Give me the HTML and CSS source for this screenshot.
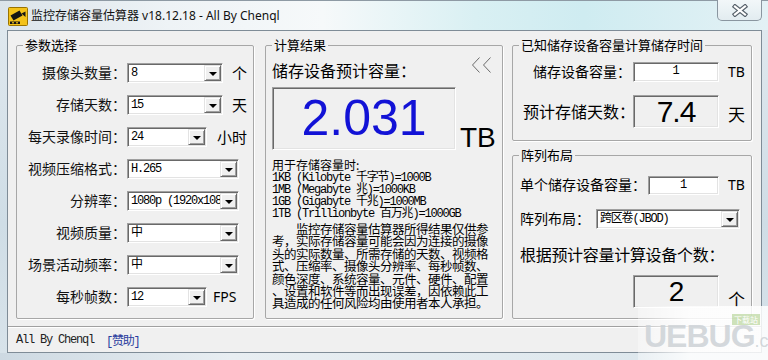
FILE: index.html
```html
<!DOCTYPE html>
<html lang="zh-CN">
<head>
    <meta charset="UTF-8">
    <title>监控存储容量估算器</title>
    <link rel="stylesheet" href="styles.css">
</head>
<body>
    <div class="window">
        <div class="titlebar">
            <svg class="app-icon" viewBox="0 0 20 19">
                <rect x="0.5" y="0.5" width="19" height="18" rx="1" fill="#f3c21a" stroke="#9a7400"/>
                <path d="M2.5 8.5 L11.5 3.5 L14.5 8.5 L5.5 13.5 Z" fill="#151515"/>
                <path d="M13.5 6.5 L17.5 4.5 L17.5 10 Z" fill="#151515"/>
                <rect x="2" y="14.5" width="10" height="2.5" fill="#151515"/>
                <rect x="4" y="15.2" width="2" height="1.2" fill="#f3c21a"/>
                <rect x="8" y="15.2" width="2" height="1.2" fill="#f3c21a"/>
            </svg>
            <span class="title">监控存储容量估算器 v18.12.18 - All By Chenql</span>
            <button class="close-btn" type="button">
                <svg width="16" height="13" viewBox="0 0 16 13">
                    <path d="M3 2.5 L13 10.5 M13 2.5 L3 10.5" stroke="#56606a" stroke-width="4.4" stroke-linecap="square"/>
                    <path d="M3 2.5 L13 10.5 M13 2.5 L3 10.5" stroke="#fff" stroke-width="2.2" stroke-linecap="square"/>
                </svg>
            </button>
        </div>

        <div class="frame-body">
            <div class="frame-side"></div>
            <div class="client">
                <div class="groups">
                    <!-- 参数选择 -->
                    <fieldset class="group group-params">
                        <legend>参数选择</legend>
                        <div class="param-grid">
                            <label>摄像头数量：</label>
                            <div class="ctrl">
                                <div class="combo combo-short sunken"><span class="combo-text">8</span><span class="combo-btn"></span></div>
                                <span class="unit">个</span>
                            </div>

                            <label>存储天数：</label>
                            <div class="ctrl">
                                <div class="combo combo-short sunken"><span class="combo-text">15</span><span class="combo-btn"></span></div>
                                <span class="unit">天</span>
                            </div>

                            <label>每天录像时间：</label>
                            <div class="ctrl">
                                <div class="combo combo-mid sunken"><span class="combo-text">24</span><span class="combo-btn"></span></div>
                                <span class="unit unit-wide">小时</span>
                            </div>

                            <label>视频压缩格式：</label>
                            <div class="ctrl">
                                <div class="combo combo-long sunken"><span class="combo-text">H.265</span><span class="combo-btn"></span></div>
                            </div>

                            <label>分辨率：</label>
                            <div class="ctrl">
                                <div class="combo combo-long sunken"><span class="combo-text">1080p (1920x1080)</span><span class="combo-btn"></span></div>
                            </div>

                            <label>视频质量：</label>
                            <div class="ctrl">
                                <div class="combo combo-long sunken"><span class="combo-text">中</span><span class="combo-btn"></span></div>
                            </div>

                            <label>场景活动频率：</label>
                            <div class="ctrl">
                                <div class="combo combo-long sunken"><span class="combo-text">中</span><span class="combo-btn"></span></div>
                            </div>

                            <label>每秒帧数：</label>
                            <div class="ctrl">
                                <div class="combo combo-mid sunken"><span class="combo-text">12</span><span class="combo-btn"></span></div>
                                <span class="unit unit-fps">FPS</span>
                            </div>
                        </div>
                    </fieldset>

                    <!-- 计算结果 -->
                    <fieldset class="group group-result">
                        <legend>计算结果</legend>
                        <div class="result-head">
                            <span class="result-title">储存设备预计容量：</span>
                            <svg class="collapse" width="22" height="16" viewBox="0 0 22 16">
                                <path d="M8.5 0.5 L1.5 8 L8.5 15.5 M19.5 0.5 L12.5 8 L19.5 15.5" fill="none" stroke="#6b6b6b" stroke-width="1"/>
                            </svg>
                        </div>
                        <div class="result-row">
                            <div class="result-box sunken">2.031</div>
                            <span class="result-unit">TB</span>
                        </div>
                        <div class="notes">
                            <div class="notes-head">用于存储容量时:</div>
                            <div>1KB (Kilobyte 千字节)=1000B</div>
                            <div>1MB (Megabyte 兆)=1000KB</div>
                            <div>1GB (Gigabyte 千兆)=1000MB</div>
                            <div>1TB (Trillionbyte 百万兆)=1000GB</div>
                        </div>
                        <div class="disclaimer">
                            <div class="indent">监控存储容量估算器所得结果仅供参</div>
                            <div>考，实际存储容量可能会因为连接的摄像</div>
                            <div>头的实际数量、所需存储的天数、视频格</div>
                            <div>式、压缩率、摄像头分辨率、每秒帧数、</div>
                            <div>颜色深度、系统容量、元件、硬件、配置</div>
                            <div>、设置和软件等而出现误差，因依赖此工</div>
                            <div>具造成的任何风险均由使用者本人承担。</div>
                        </div>
                    </fieldset>

                    <div class="right-col">
                        <!-- 已知容量求时间 -->
                        <fieldset class="group group-time">
                            <legend>已知储存设备容量计算储存时间</legend>
                            <div class="time-grid">
                                <label>储存设备容量：</label>
                                <div class="field sunken">1</div>
                                <span class="unit-tb">TB</span>

                                <label class="label-big">预计存储天数：</label>
                                <div class="value-box sunken">7.4</div>
                                <span class="unit-big">天</span>
                            </div>
                        </fieldset>

                        <!-- 阵列布局 -->
                        <fieldset class="group group-array">
                            <legend>阵列布局</legend>
                            <div class="array-row first">
                                <label class="array-label">单个储存设备容量：</label>
                                <div class="field field-small sunken">1</div>
                                <span class="unit-tb">TB</span>
                            </div>
                            <div class="array-row">
                                <label class="array-label short">阵列布局：</label>
                                <div class="combo combo-raid sunken"><span class="combo-text">跨区卷(JBOD)</span><span class="combo-btn"></span></div>
                            </div>
                            <div class="count-title">根据预计容量计算设备个数：</div>
                            <div class="array-row count-row">
                                <div class="value-box count-box sunken">2</div>
                                <span class="unit-big">个</span>
                            </div>
                        </fieldset>
                    </div>
                </div>

                <div class="separator"></div>
                <div class="statusbar">
                    <span>All By Chenql</span>
                    <a class="donate">[赞助]</a>
                </div>
            </div>
            <div class="frame-side right"></div>
        </div>
        <div class="frame-bottom"></div>

        <div class="watermark">
            <span class="wm-text">UEBUG</span><span class="wm-com">.com</span>
            <span class="wm-badge">下载站</span>
        </div>
    </div>
</body>
</html>
```

FILE: styles.css
```css
* {
    box-sizing: border-box;
}

body {
    margin: 0;
    width: 768px;
    height: 360px;
    overflow: hidden;
    font-family: "Noto Sans", "Noto Sans CJK SC", sans-serif;
    color: #000;
    background: #d6e2ea;
    text-spacing-trim: space-all;
}

.window {
    position: relative;
    width: 768px;
    height: 360px;
    overflow: hidden;
    display: flex;
    flex-direction: column;
    background: linear-gradient(90deg, #dbe4ea 0%, #eef3f6 22%, #f6f9fa 42%, #d9f0f3 62%, #cfecf1 76%, #e3f1f5 100%);
}

/* title bar */
.titlebar {
    height: 30px;
    display: flex;
    align-items: center;
    padding-left: 8px;
    border-top: 1px solid #8e9aa4;
}

.app-icon {
    width: 20px;
    height: 19px;
    margin-top: 2px;
}

.title {
    margin-left: 3px;
    margin-top: 1px;
    font-size: 12px;
    line-height: 16px;
    color: #111;
}

.close-btn {
    margin-left: auto;
    margin-right: 6px;
    align-self: flex-start;
    margin-top: -1px;
    width: 45px;
    height: 21px;
    padding: 0;
    border: 1px solid #8a96a0;
    border-top: none;
    border-radius: 0 0 5px 5px;
    background: linear-gradient(#f2f7f9, #e2ecf0);
    display: flex;
    align-items: center;
    justify-content: center;
}

/* window frame */
.frame-body {
    display: flex;
    height: 323px;
}

.frame-side {
    width: 7px;
    background: linear-gradient(#dfe8ee, #cfdde6 60%, #d8e3ea);
}

.frame-side.right {
    width: 6px;
}

.frame-bottom {
    height: 7px;
    background: linear-gradient(90deg, #cdd9e2, #e8eef2 30%, #dbe6ec);
}

.client {
    width: 755px;
    height: 323px;
    background: #f0f0f0;
    border: 1px solid #7f8c97;
    padding-top: 6px;
    display: flex;
    flex-direction: column;
}

.groups {
    display: flex;
    height: 282px;
    padding-left: 8px;
}

/* group boxes */
.group {
    margin: 0;
    padding: 0;
    min-width: 0;
    border: 1px solid #a7a7a7;
    box-shadow: 1px 1px 0 #fff;
    border-radius: 2px;
}

.group legend {
    margin-left: 6px;
    padding: 0 2px;
    font-size: 13px;
    line-height: 16px;
}

.group-params {
    width: 238px;
    height: 282px;
}

.group-result {
    width: 238px;
    height: 282px;
    margin-left: 11px;
}

.right-col {
    width: 240px;
    margin-left: 9px;
    display: flex;
    flex-direction: column;
}

.group-time {
    height: 104px;
}

.group-array {
    height: 172px;
    margin-top: 6px;
}

/* sunken control edge */
.sunken {
    border: 1px solid;
    border-color: #a0a0a0 #fff #fff #a0a0a0;
    box-shadow: inset 1px 1px 0 #696969, inset -1px -1px 0 #e3e3e3;
}

/* combo boxes */
.combo {
    height: 20px;
    display: flex;
    align-items: center;
    background: #fff;
    font-family: "Liberation Mono", "Noto Sans CJK SC", monospace;
    font-size: 12px;
    letter-spacing: -1.2px;
}

.combo-text {
    flex: 1;
    padding-left: 3px;
    overflow: hidden;
    white-space: nowrap;
    line-height: 16px;
}

.combo-btn {
    flex: none;
    width: 17px;
    height: 16px;
    margin-right: 1px;
    background: #f0f0f0;
    border: 1px solid;
    border-color: #e3e3e3 #696969 #696969 #e3e3e3;
    box-shadow: inset 1px 1px 0 #fff, inset -1px -1px 0 #a0a0a0;
    display: flex;
    align-items: center;
    justify-content: center;
}

.combo-btn::after {
    content: "";
    width: 0;
    height: 0;
    border-top: 4px solid #000;
    border-left: 4px solid transparent;
    border-right: 4px solid transparent;
    margin-top: 1px;
}

.combo-short { width: 96px; }
.combo-mid { width: 80px; }
.combo-long { width: 112px; }
.combo-raid { width: 144px; }

/* 参数选择 */
.param-grid {
    margin-top: 4px;
    display: grid;
    grid-template-columns: 110px 1fr;
    grid-auto-rows: 32px;
    align-items: center;
}

.param-grid label {
    text-align: right;
    font-size: 14px;
    line-height: 20px;
    padding-right: 1px;
    color: #111;
}

.ctrl {
    display: flex;
    align-items: center;
}

.unit {
    margin-left: 9px;
    font-size: 15px;
    line-height: 20px;
}

.unit-wide {
    margin-left: 10px;
}

.unit-fps {
    margin-left: 6px;
    font-size: 14px;
}

/* 计算结果 */
.result-head {
    display: flex;
    justify-content: space-between;
    margin: 8px 9px 0 6px;
}

.result-title {
    font-size: 16px;
    line-height: 20px;
}

.collapse {
    margin-top: -4px;
}

.result-row {
    display: flex;
    align-items: flex-end;
    margin: 6px 0 0 6px;
}

.result-box {
    width: 184px;
    height: 63px;
    display: flex;
    align-items: center;
    justify-content: center;
    background: #f0f0f0;
    font-family: "Liberation Sans", sans-serif;
    font-size: 50px;
    color: #1212d6;
    padding-bottom: 2px;
}

.result-unit {
    margin-left: 4px;
    margin-bottom: -2px;
    font-family: "Liberation Sans", sans-serif;
    font-size: 28px;
    line-height: 28px;
}

.notes {
    margin: 8px 0 0 6px;
    font-family: "Liberation Mono", "Noto Sans CJK SC", monospace;
    font-size: 12px;
    line-height: 12px;
    letter-spacing: -1.2px;
    white-space: nowrap;
}

.notes .notes-head {
    font-family: "Noto Sans CJK SC", sans-serif;
    letter-spacing: 0;
    line-height: 14px;
}

.disclaimer {
    margin: 3px 0 0 6px;
    font-family: "Noto Sans CJK SC", sans-serif;
    font-size: 12.5px;
    line-height: 12.4px;
    letter-spacing: -0.5px;
    white-space: nowrap;
}

.disclaimer .indent {
    padding-left: 24px;
}

/* 已知容量计算时间 */
.time-grid {
    margin-top: 9px;
    display: grid;
    grid-template-columns: 118px 86px auto;
    column-gap: 2px;
    row-gap: 13px;
    align-items: center;
}

.time-grid label {
    text-align: right;
    font-size: 14px;
    line-height: 20px;
}

.time-grid .label-big {
    font-size: 16px;
    margin-right: -4px;
}

.field {
    height: 20px;
    background: #fff;
    text-align: center;
    font-family: "Liberation Mono", monospace;
    font-size: 12px;
    line-height: 17px;
}

.value-box {
    height: 33px;
    display: flex;
    align-items: center;
    justify-content: center;
    background: #f0f0f0;
    font-family: "Liberation Sans", sans-serif;
    font-size: 30px;
    letter-spacing: -1px;
}

.unit-tb {
    margin-left: 7px;
    font-size: 14px;
    line-height: 20px;
}

.unit-big {
    margin-left: 7px;
    font-size: 17px;
    line-height: 20px;
    margin-top: 6px;
}

/* 阵列布局 */
.array-row {
    display: flex;
    align-items: center;
    padding-left: 7px;
    margin-top: 14px;
}

.array-row.first {
    margin-top: 12px;
}

.array-label {
    width: 128px;
    font-size: 14px;
    line-height: 20px;
}

.array-label.short {
    width: 76px;
}

.field-small {
    width: 71px;
    height: 19px;
    line-height: 16px;
}

.array-row .unit-tb {
    margin-left: 9px;
}

.count-title {
    margin: 15px 0 0 7px;
    font-size: 16px;
    line-height: 22px;
    letter-spacing: -0.3px;
}

.count-row {
    margin-top: 9px;
    align-items: flex-end;
}

.count-box {
    width: 86px;
    margin-left: 113px;
    font-size: 28px;
}

.count-row .unit-big {
    margin-left: 9px;
    margin-bottom: -2px;
}

/* status bar */
.separator {
    margin-top: 7px;
    height: 2px;
    border-top: 1px solid #a0a0a0;
    border-bottom: 1px solid #fff;
}

.statusbar {
    height: 23px;
    display: flex;
    align-items: center;
    padding-left: 8px;
    font-family: "Liberation Mono", "Noto Sans CJK SC", monospace;
    font-size: 12px;
    letter-spacing: -1.2px;
    color: #222;
}

.donate {
    margin-left: 12px;
    color: #2a3c9e;
}

/* site watermark over the corner */
.watermark {
    position: absolute;
    right: 0;
    bottom: 0;
    width: 130px;
    height: 54px;
    overflow: hidden;
    background: linear-gradient(90deg, rgba(255, 255, 255, 0.35), rgba(255, 255, 255, 0.85) 40%);
    font-family: "Liberation Sans", sans-serif;
    font-weight: bold;
    color: rgba(205, 210, 214, 0.85);
    padding: 12px 0 0 6px;
    white-space: nowrap;
}

.wm-text {
    font-size: 32px;
    letter-spacing: -1px;
}

.wm-com {
    font-size: 18px;
    font-weight: normal;
}

.wm-badge {
    position: absolute;
    right: 8px;
    top: 8px;
    font-size: 8px;
    font-weight: normal;
    padding: 0 2px;
    color: #fff;
    background: rgba(160, 200, 120, 0.5);
    font-family: "Noto Sans CJK SC", sans-serif;
}
```
